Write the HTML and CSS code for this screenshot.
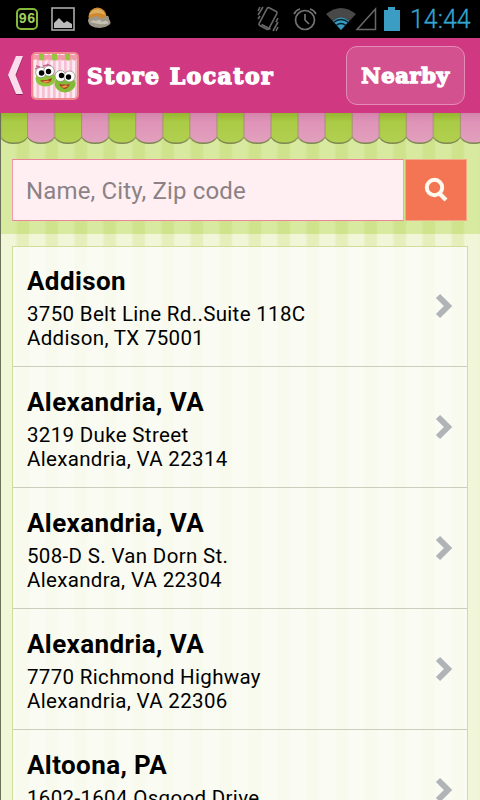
FILE: index.html
```html
<!DOCTYPE html>
<html lang="en">
<head>
    <meta charset="UTF-8">
    <meta name="viewport" content="width=device-width, initial-scale=1.0">
    <title>Store Locator</title>
    <link rel="stylesheet" href="styles.css">
</head>
<body>
    <div class="status-bar">
        <div class="notifications">
            <span class="battery-level">96</span>
            <svg class="photo" width="24" height="24" viewBox="0 0 24 24">
                <rect x="1" y="1" width="22" height="22" fill="#000" stroke="#aaa" stroke-width="1.6"/>
                <path d="M3 21v-5l5-5 5 5 3-2 5 3v4z" fill="#bbb"/>
            </svg>
            <svg width="24" height="24" viewBox="0 0 24 24">
                <circle cx="10.500" cy="9.500" r="9" fill="#cf882a"/>
                <path d="M2 8q3-6 9-6 6 1 7 6-7-4-16 0z" fill="#dcae62"/>
                <path d="M1 14q0-4 4-3 4-4 8 0 4 1 6-2 3-1 3 3 3 4 0 6-4 3-9 3-11 0-12-7z" fill="#9c9789"/>
                <path d="M3 15q3-3 6-1 4-3 6 1 4-3 7 1-5 3-19-1z" fill="#c4c0b2"/>
            </svg>
        </div>
        <div class="indicators">
            <svg width="22" height="26" viewBox="0 0 22 26" fill="none" stroke="#686868" stroke-width="1.6">
                <rect x="5.5" y="2.5" width="11" height="20" rx="1.5" transform="rotate(28 11 12.5)"/>
                <path d="M4.500 18.500l9 4.800M1 9l5-8M1 13l2-3M21 16l-5 9M21 12l-2 4M1 5l2-4M21 21l-2 4"/>
            </svg>
            <svg class="alarm" width="24" height="24" viewBox="0 0 24 24" fill="none" stroke="#737373" stroke-width="1.7">
                <circle cx="12" cy="13" r="9.5"/>
                <path d="M12 7v6l4 4M1 7q2-4 6-5M23 7q-2-4-6-5"/>
            </svg>
            <svg class="wifi" width="32" height="24" viewBox="0 0 32 24">
                <path d="M1 7q15-12 30 0L16 23z" fill="#484848"/>
                <path d="M8 14q8-7 16 0l-8 9z" fill="#379cc2"/>
                <path d="M8.500 15.500q7.500-6 15 0M11 18.500q5-4 10 0" fill="none" stroke="#07222c" stroke-width="1.300"/>
            </svg>
            <svg class="signal" width="22" height="24" viewBox="0 0 22 24">
                <path d="M2 22.500L20.500 2v20.500z" fill="none" stroke="#686868" stroke-width="1.500"/>
            </svg>
            <svg class="battery" width="16" height="24" viewBox="0 0 16 24">
                <path d="M0 3h4V0h7v3h5v21H0z" fill="#3b9dc4"/>
            </svg>
            <span class="clock">14:44</span>
        </div>
    </div>

    <header class="header">
        <svg class="back" width="16" height="40" viewBox="0 0 16 40">
            <path d="M8 1h7L8 20l7 19H8L0 20z" fill="#8c2358"/>
            <path d="M8 0h7L7.500 19 15 38H8L0 19z" fill="#fbdcec"/>
        </svg>
        <svg class="logo" width="48" height="48" viewBox="0 0 48 48">
            <defs>
                <pattern id="candy" width="5.500" height="48" patternUnits="userSpaceOnUse">
                    <rect width="5.500" height="48" fill="#fbeaf0"/>
                    <rect width="2.700" height="48" fill="#f7bfd4"/>
                </pattern>
            </defs>
            <rect width="48" height="48" rx="5" fill="#ef858d"/>
            <rect x="2" y="2" width="44" height="44" rx="4" fill="url(#candy)"/>
            <path d="M2 3h44v4q-3 3-5 0-3 3-6 0-3 3-6 0-3 3-6 0-3 3-6 0-3 3-6 0-3 3-6 0-3 2-3 0z" fill="#f39aaa"/>
            <path d="M8 2h5v5q-2 3-5 0zM21 2h5v5q-2 3-5 0zM34 2h5v5q-2 3-5 0z" fill="#94c63c"/>
            <ellipse cx="14.500" cy="26.500" rx="10" ry="8" fill="#91c63c"/>
            <ellipse cx="34" cy="31.500" rx="10.500" ry="9" fill="#83bb36"/>
            <path d="M4 17l4-2M5 14l4 1M12 14l5-1M16 12l4 2" stroke="#cc6196" stroke-width="1.300"/>
            <g fill="#fff" stroke="#69715a" stroke-width=".6">
                <circle cx="10" cy="20.500" r="5.300"/>
                <circle cx="18" cy="19" r="5.300"/>
                <circle cx="29.500" cy="24" r="5.500"/>
                <circle cx="38.500" cy="24.500" r="5.500"/>
            </g>
            <circle cx="10.500" cy="21" r="2.700"/>
            <circle cx="17.500" cy="19.500" r="2.700"/>
            <circle cx="30.500" cy="23.500" r="2.700"/>
            <circle cx="37.500" cy="25" r="2.700"/>
            <path d="M9 28q6 1 12-2-1 6-7 5-3 0-5-3zM28 32q6 1 11 0-2 5-6 5-3-1-5-5z" fill="#a93b26"/>
            <path d="M11 30q4-2 8-1-3 3-8 1zM30 35q4-3 7-1-3 3-7 1z" fill="#f49c3c"/>
        </svg>
        <h1>Store Locator</h1>
        <a class="nearby" href="#">Nearby</a>
    </header>

    <main class="page">
        <div class="search-area">
            <svg class="awning" width="480" height="32">
                <defs>
                    <linearGradient id="green" x2="0" y2="1">
                        <stop offset="0" stop-color="#96b532"/>
                        <stop offset=".3" stop-color="#aacb46"/>
                        <stop offset="1" stop-color="#b2d050"/>
                    </linearGradient>
                    <linearGradient id="pink" x2="0" y2="1">
                        <stop offset="0" stop-color="#d384ab"/>
                        <stop offset=".3" stop-color="#df93b8"/>
                        <stop offset="1" stop-color="#e2a0bd"/>
                    </linearGradient>
                    <pattern id="scallops" x="0.500" width="54.100" height="32" patternUnits="userSpaceOnUse">
                        <path d="M0 0h54.100v25q-4 6-13.500 6T27 25q-4 6-13.500 6T0 25z" fill="#7c8650"/>
                        <path d="M.3 0h26.500v24q-4 5.500-13.200 5.500T.3 24z" fill="url(#green)"/>
                        <path d="M27.300 0h26.500v24q-4 5.500-13.200 5.500t-13.300-5.500z" fill="url(#pink)"/>
                    </pattern>
                </defs>
                <rect width="480" height="32" fill="url(#scallops)"/>
            </svg>
            <form class="search">
                <input type="text" placeholder="Name, City, Zip code">
                <button type="button" aria-label="Search">
                    <svg width="24" height="26" viewBox="0 0 24 26" fill="none" stroke="#fffaf0">
                        <circle cx="10.500" cy="10.500" r="7.700" stroke-width="4"/>
                        <path d="M15.500 16.500l6.500 6.500" stroke-width="4.200"/>
                    </svg>
                </button>
            </form>
        </div>

        <ul class="stores">
            <li>
                <div>
                    <h2>Addison</h2>
                    <p>3750 Belt Line Rd..Suite 118C<br>Addison, TX 75001</p>
                </div>
                <svg class="arrow" width="18" height="26" viewBox="0 0 18 26"><path d="M3 3l10 10L3 23"/></svg>
            </li>
            <li>
                <div>
                    <h2>Alexandria, VA</h2>
                    <p>3219 Duke Street<br>Alexandria, VA 22314</p>
                </div>
                <svg class="arrow" width="18" height="26" viewBox="0 0 18 26"><path d="M3 3l10 10L3 23"/></svg>
            </li>
            <li>
                <div>
                    <h2>Alexandria, VA</h2>
                    <p>508-D S. Van Dorn St.<br>Alexandra, VA 22304</p>
                </div>
                <svg class="arrow" width="18" height="26" viewBox="0 0 18 26"><path d="M3 3l10 10L3 23"/></svg>
            </li>
            <li>
                <div>
                    <h2>Alexandria, VA</h2>
                    <p>7770 Richmond Highway<br>Alexandria, VA 22306</p>
                </div>
                <svg class="arrow" width="18" height="26" viewBox="0 0 18 26"><path d="M3 3l10 10L3 23"/></svg>
            </li>
            <li>
                <div>
                    <h2>Altoona, PA</h2>
                    <p>1602-1604 Osgood Drive</p>
                </div>
                <svg class="arrow" width="18" height="26" viewBox="0 0 18 26"><path d="M3 3l10 10L3 23"/></svg>
            </li>
        </ul>
    </main>
</body>
</html>
```
FILE: styles.css
```css
* {
    box-sizing: border-box;
}
body {
    margin: 0;
    height: 800px;
    overflow: hidden;
    display: flex;
    flex-direction: column;
    font-family: Roboto, sans-serif;
    color: #000;
}
h1, h2, p, ul {
    margin: 0;
    padding: 0;
}
svg {
    display: block;
    flex-shrink: 0;
}

/* status bar */
.status-bar {
    height: 38px;
    flex-shrink: 0;
    background: #000;
    display: flex;
    justify-content: space-between;
    padding: 0 9px 0 16px;
}
.notifications, .indicators {
    display: flex;
    align-items: center;
}
.battery-level {
    width: 22px;
    height: 22px;
    border: 2px solid #83b83b;
    border-radius: 5px;
    color: #a0ce5d;
    font: bold 14px/19px "Liberation Mono", monospace;
    text-align: center;
}
.photo {
    margin: 0 12px 0 13px;
}
.alarm {
    margin-left: 14px;
}
.wifi {
    margin-left: 8px;
}
.signal {
    margin-left: -2px;
}
.battery {
    margin-left: 7px;
}
.clock {
    margin-left: 10px;
    width: 61px;
    white-space: nowrap;
    color: #33a5d2;
    font-size: 25px;
    font-weight: 300;
    -webkit-text-stroke: 0.3px #33a5d2;
}

/* header */
.header {
    height: 75px;
    flex-shrink: 0;
    background: #d03882;
    display: flex;
    align-items: center;
    padding: 0 15px 0 8px;
    color: #fff;
    font-family: "DejaVu Serif", serif;
}
.logo {
    margin-left: 7px;
}
.header h1 {
    margin-left: 8px;
    font-size: 22px;
    letter-spacing: 1.45px;
    white-space: nowrap;
    -webkit-text-stroke: 1.4px #fff;
}
.nearby {
    width: 119px;
    height: 59px;
    margin-left: auto;
    border: 1px solid #e58bb8;
    border-radius: 11px;
    background: #d3518e;
    color: #fff;
    font-size: 21px;
    font-weight: bold;
    letter-spacing: 0.7px;
    line-height: 57px;
    text-align: center;
    text-decoration: none;
    -webkit-text-stroke: 1.4px #fff;
}

/* striped page */
.page {
    flex: 1;
    min-height: 0;
    overflow: hidden;
    border-left: 1px solid #6b7058;
    background: repeating-linear-gradient(90deg, #f1f6d8 0 14px, #e6efbb 17px 27px, #f1f6d8 29px);
}
.search-area {
    height: 121px;
    background: repeating-linear-gradient(90deg, #d8e9a0 0 14px, #cfe38c 17px 27px, #d8e9a0 29px);
}
.awning {
    margin-left: -1px;
}
.search {
    display: flex;
    margin: 14px 0 0 11px;
    width: 455px;
    height: 62px;
}
.search input {
    width: 392px;
    height: 62px;
    padding: 2px 14px 0 13px;
    border: 1.5px solid #e98798;
    border-color: #e98798 #eeabad #e98798 #f29cb3;
    border-radius: 0;
    background: #ffeff3;
    font: 24px Roboto, sans-serif;
    letter-spacing: 0.15px;
}
.search input::placeholder {
    color: #8b8285;
}
.search button {
    width: 62px;
    height: 62px;
    margin-left: 1px;
    padding: 0;
    border: 1px solid #f5a789;
    background: #f37554;
    display: flex;
    align-items: center;
    justify-content: center;
}

/* store list */
.stores {
    width: 456px;
    margin: 12px 0 0 11px;
    list-style: none;
    border: 1px solid #d0df98;
    background: rgba(253, 253, 250, 0.8);
}
.stores li {
    height: 121px;
    padding: 19px 14px 0;
    border-bottom: 1px solid #c9cebd;
    display: flex;
    justify-content: space-between;
}
.stores li:first-child {
    height: 120px;
    padding-top: 18px;
}
.stores h2 {
    font-size: 26px;
    line-height: 32px;
    letter-spacing: 0.4px;
}
.stores p {
    margin-top: 5px;
    font-size: 20.5px;
    line-height: 24px;
    letter-spacing: 0.33px;
    white-space: nowrap;
}
.arrow {
    margin: 28px 0 0;
}
.arrow path {
    fill: none;
    stroke: #b0b4b7;
    stroke-width: 6;
}
```
